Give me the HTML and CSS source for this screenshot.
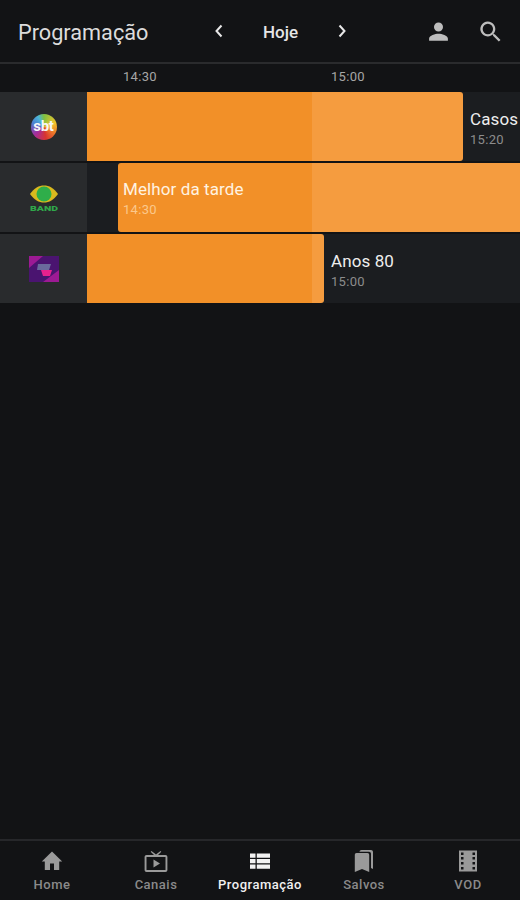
FILE: index.html
```html
<!DOCTYPE html>
<html lang="pt-BR">
    <head>
        <meta charset="utf-8">
        <title>Programação</title>
        <link rel="stylesheet" href="styles.css">
    </head>
    <body>
        <div id="app">
            <header class="topbar">
                <h1 class="title">Programação</h1>
                <div class="daypick">
                    <svg class="chev" viewBox="0 0 12 16"><path d="M8.5 2.5 3.5 8l5 5.500"/></svg>
                    <span class="day">Hoje</span>
                    <svg class="chev" viewBox="0 0 12 16"><path d="M3.500 2.500 8.500 8l-5 5.500"/></svg>
                </div>
                <div class="actions">
                    <svg class="act" viewBox="0 0 24 24"><path d="M12 12a4.700 4.700 0 1 0 0-9.400 4.700 4.700 0 0 0 0 9.400zm0 2.300c-3.400 0-9.800 1.700-9.800 5v2.400h19.600v-2.400c0-3.300-6.400-5-9.800-5z"/></svg>
                    <svg class="act" viewBox="2 2 20 20"><path d="M15.700 14.300h-.8l-.3-.3a6.500 6.500 0 1 0-.7.7l.3.300v.8l5 5 1.500-1.500-5-5zm-6 0a4.500 4.500 0 1 1 0-9 4.500 4.500 0 0 1 0 9z"/></svg>
                </div>
            </header>

            <div class="times">
                <span class="time t1">14:30</span>
                <span class="time">15:00</span>
            </div>

            <div class="rows">
                <div class="row">
                    <div class="chan">
                        <div class="sbt">sbt</div>
                    </div>
                    <div class="track">
                        <div class="prog p1"></div>
                        <div class="info">
                            <span class="name">Casos</span>
                            <span class="start">15:20</span>
                        </div>
                    </div>
                </div>
                <div class="row">
                    <div class="chan">
                        <svg class="logo" viewBox="0 0 30 28">
                            <path d="M1 10C5 4 10 1.500 15 1.500S25 4 29 10c-4 6-9 8.500-14 8.500S5 16 1 10z" fill="#d9b91e"/>
                            <circle cx="15" cy="10" r="7.500" fill="#2fae4a"/>
                            <text x="15" y="27" class="band-text" textLength="28" lengthAdjust="spacingAndGlyphs">BAND</text>
                        </svg>
                    </div>
                    <div class="track">
                        <div class="gap"></div>
                        <div class="prog p2">
                            <span class="name">Melhor da tarde</span>
                            <span class="start">14:30</span>
                        </div>
                    </div>
                </div>
                <div class="row">
                    <div class="chan">
                        <svg class="logo" viewBox="0 0 30 26">
                            <path d="M0 0h30v26H0z" fill="#4a1470"/>
                            <path d="M0 0h14L0 12zM30 26H14l16-12z" fill="#9c1a94"/>
                            <path d="M9 8h13l-2 6H8z" fill="#6a6a9c"/>
                            <path d="M12 14h11l-2 6h-7z" fill="#e8218e"/>
                        </svg>
                    </div>
                    <div class="track">
                        <div class="prog p3"></div>
                        <div class="info">
                            <span class="name">Anos 80</span>
                            <span class="start">15:00</span>
                        </div>
                    </div>
                </div>
            </div>

            <nav class="tabs">
                <div class="tab">
                    <svg class="tabicon" viewBox="0 0 24 24"><path d="M10 21v-6.500h4V21h5.200v-8.500h3L12 2.500 1.800 12.500h3V21z"/></svg>
                    <span>Home</span>
                </div>
                <div class="tab">
                    <svg class="tabicon" viewBox="0 0 24 24"><path d="M21.500 6H14l3.300-3.300-.8-.7L12 5.500 7.500 2l-.8.700L10 6H2.500C1.400 6 .6 6.900.6 8v13c0 1.100.8 2 1.900 2h19c1.100 0 1.900-.9 1.900-2V8c0-1.100-.8-2-1.900-2zm0 15h-19V8h19zM9.500 10.500v8l6.500-4z"/></svg>
                    <span>Canais</span>
                </div>
                <div class="tab on">
                    <svg class="tabicon" viewBox="0 0 24 24"><path d="M2 4.500h5.500v4.300H2zM8.800 4.500H22v4.300H8.800zM2 10h5.500v4.300H2zM8.800 10H22v4.300H8.800zM2 15.500h5.500v4.300H2zM8.800 15.500H22v4.300H8.800z"/></svg>
                    <span>Programação</span>
                </div>
                <div class="tab">
                    <svg class="tabicon" viewBox="0 0 24 24"><path d="M19 1H9.500C8.400 1 7.600 1.800 7.500 2.800H17c1.100 0 2 .9 2 2V19l2 1V3c0-1.100-.9-2-2-2zM15.500 4H4.500C3.400 4 2.800 4.900 2.800 6v17L10 20l7.200 3V6c0-1.100-.6-2-1.700-2z"/></svg>
                    <span>Salvos</span>
                </div>
                <div class="tab">
                    <svg class="tabicon" viewBox="0 0 24 24"><path fill-rule="evenodd" d="M3 1.500h18v21H3zM5 3.500v2.500h2.500V3.500zM16.500 3.500V6H19V3.500zM5 8v2.500h2.500V8zM16.500 8v2.500H19V8zM5 13v2.500h2.500V13zM16.500 13v2.500H19V13zM5 18v2.500h2.500V18zM16.500 18v2.500H19V18z"/></svg>
                    <span>VOD</span>
                </div>
            </nav>
        </div>
    </body>
</html>
```

FILE: styles.css
```css
html, body{
    margin: 0;
    height: 100%;
    background-color: #121315;
    font-family: Roboto, "Liberation Sans", sans-serif;
    overflow: hidden;
}
#app{
    display: flex;
    flex-direction: column;
    height: 900px;
}
.topbar{
    display: flex;
    align-items: center;
    flex: none;
    height: 64px;
    padding: 0 18px;
    box-sizing: border-box;
    border-bottom: 2px solid #2a2b2d;
}
.title{
    margin: 2px 0 0 0;
    width: 195px;
    font-size: 21.7px;
    font-weight: 400;
    color: #dcdcdc;
}
.daypick{
    display: flex;
    align-items: center;
    width: 135px;
    justify-content: space-between;
}
.chev{
    width: 12px;
    height: 16px;
    fill: none;
    stroke: #e8e8e8;
    stroke-width: 2;
}
.day{
    margin-top: 2px;
    font-size: 17px;
    font-weight: 500;
    color: #e6e6e6;
}
.actions{
    display: flex;
    gap: 29px;
    margin-left: auto;
}
.act{
    width: 23px;
    height: 23px;
    fill: #bdbdbd;
}
.times{
    display: flex;
    height: 28px;
    flex: none;
    align-items: center;
    box-sizing: border-box;
    padding: 0 0 4px 123px;
    font-size: 13px;
    color: #a6a6a6;
}
.time{
    letter-spacing: .3px;
}
.t1{
    width: 208px;
}
.rows{
    display: flex;
    flex-direction: column;
    gap: 2px;
    flex: 1;
}
.row{
    display: flex;
    height: 69px;
    background-color: #1b1d20;
}
.chan{
    display: flex;
    align-items: center;
    justify-content: center;
    width: 87px;
    flex: none;
    background-color: #292b2d;
}
.logo{
    width: 30px;
    height: 28px;
}
.sbt{
    width: 26px;
    height: 26px;
    border-radius: 50%;
    background: conic-gradient(#7fc241, #f2c32c 70deg, #ec7a2a 120deg, #d8342f 170deg, #a52c9c 230deg, #4a7fd0 290deg, #4cb6d8 330deg, #7fc241);
    font-size: 15px;
    font-weight: 700;
    line-height: 24px;
    letter-spacing: -.3px;
    text-align: center;
    color: #f6f6f6;
}
.band-text{
    font-size: 8px;
    font-weight: 900;
    fill: #2fa84a;
    text-anchor: middle;
}
.track{
    display: flex;
    flex: 1;
    min-width: 0;
    overflow: hidden;
}
.gap{
    width: 31px;
    flex: none;
}
.prog{
    display: flex;
    flex-direction: column;
    justify-content: center;
    flex: none;
    box-sizing: border-box;
    border-radius: 3px;
}
.p1{
    width: 376px;
    border-radius: 0 3px 3px 0;
    background: linear-gradient(to right, #f29028 225px, #f59c3f 225px);
}
.p2{
    width: 410px;
    padding: 3px 0 0 5px;
    background: linear-gradient(to right, #f29028 194px, #f59c3f 194px);
}
.p3{
    width: 237px;
    border-radius: 0 3px 3px 0;
    background: linear-gradient(to right, #f29028 225px, #f59c3f 225px);
}
.info{
    display: flex;
    flex-direction: column;
    justify-content: center;
    padding: 4px 0 0 7px;
    white-space: nowrap;
}
.name{
    font-size: 17px;
    line-height: 22px;
    letter-spacing: .1px;
    color: #eeeeee;
    white-space: nowrap;
}
.start{
    font-size: 13px;
    line-height: 20px;
    color: #8c8c8c;
    letter-spacing: .3px;
}
.p2 .name{
    color: #fff3e2;
}
.p2 .start{
    color: #fbc88c;
}
.tabs{
    display: grid;
    grid-template-columns: repeat(5, 1fr);
    height: 61px;
    flex: none;
    box-sizing: border-box;
    border-top: 2px solid #26272a;
}
.tab{
    display: flex;
    flex-direction: column;
    align-items: center;
    padding-top: 8px;
    font-size: 13px;
    font-weight: 500;
    letter-spacing: .5px;
    color: #8a8a8a;
}
.tab span{
    line-height: 16px;
    margin-top: 4px;
    white-space: nowrap;
}
.tabicon{
    width: 24px;
    height: 24px;
    fill: #9a9a9a;
}
.on{
    color: #f0f0f0;
}
.on .tabicon{
    fill: #f2f2f2;
}
```
